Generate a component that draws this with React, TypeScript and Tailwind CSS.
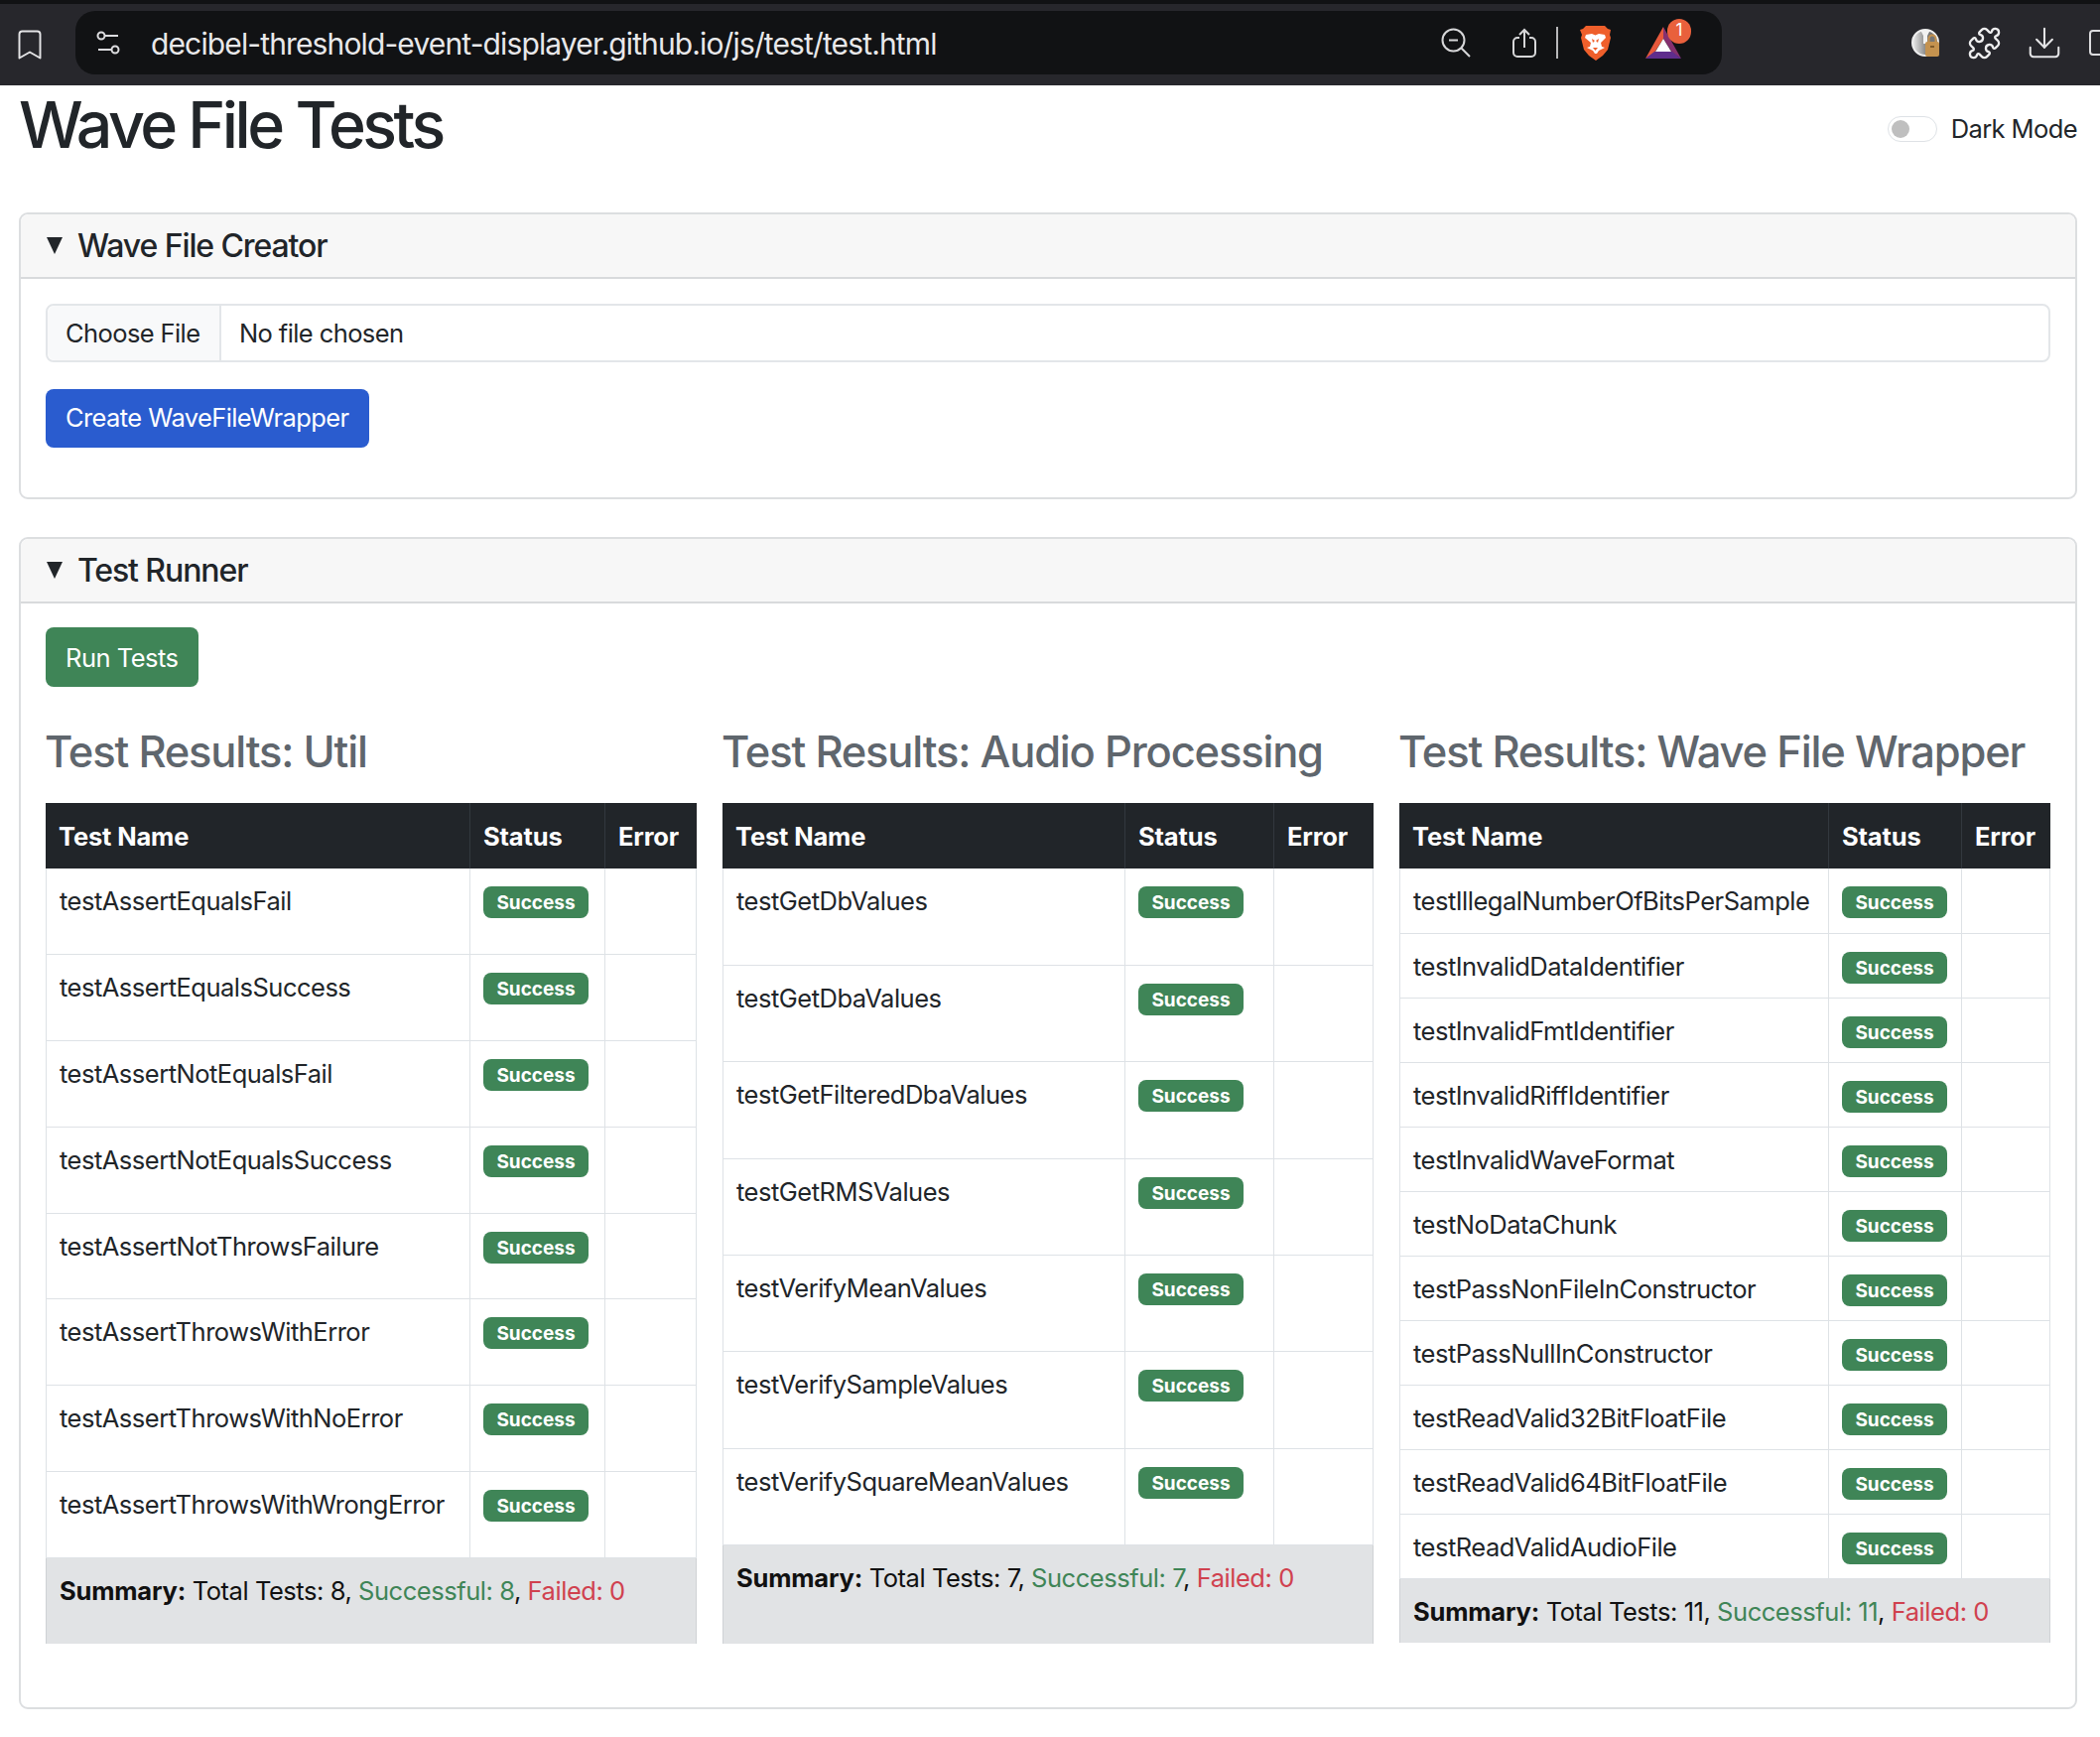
import { Bookmark, Download, Puzzle } from "lucide-react";

const UTIL = [
  "testAssertEqualsFail",
  "testAssertEqualsSuccess",
  "testAssertNotEqualsFail",
  "testAssertNotEqualsSuccess",
  "testAssertNotThrowsFailure",
  "testAssertThrowsWithError",
  "testAssertThrowsWithNoError",
  "testAssertThrowsWithWrongError",
];

const AUDIO = [
  "testGetDbValues",
  "testGetDbaValues",
  "testGetFilteredDbaValues",
  "testGetRMSValues",
  "testVerifyMeanValues",
  "testVerifySampleValues",
  "testVerifySquareMeanValues",
];

const WAVE = [
  "testIllegalNumberOfBitsPerSample",
  "testInvalidDataIdentifier",
  "testInvalidFmtIdentifier",
  "testInvalidRiffIdentifier",
  "testInvalidWaveFormat",
  "testNoDataChunk",
  "testPassNonFileInConstructor",
  "testPassNullInConstructor",
  "testReadValid32BitFloatFile",
  "testReadValid64BitFloatFile",
  "testReadValidAudioFile",
];

const SUITES = [
  { title: "Test Results: Util", tests: UTIL, rowH: 86.75, sumH: 87, w1: 427, w2: 136 },
  { title: "Test Results: Audio Processing", tests: AUDIO, rowH: 97.4, sumH: 99, w1: 405, w2: 150 },
  { title: "Test Results: Wave File Wrapper", tests: WAVE, rowH: 65, sumH: 65, w1: 432, w2: 134 },
];

function BraveIcon() {
  return (
    <svg width="31" height="35" viewBox="0 0 31 35" className="shrink-0">
      <path d="M6 0h19l3 3 3 1-1 5 1 3-3 12-5 6-7 5-7-5-5-6L1 12l1-3-2-5 3-1z" fill="#ef5f2b" />
      <path d="M6 9l6-1 3.500 1.500L19 8l6 1 1 3-5 5 1 4 3 1-6 3-2 3h-2l-2-3-6-3 3-1 1-4-6-5z" fill="#fff" />
      <path d="M12 13l3 2-2 2zM19 13l-3 2 2 2z" fill="#ef5f2b" />
      <path d="M13 22h5l-2.500 3z" fill="#ef5f2b" />
    </svg>
  );
}

function BatIcon() {
  return (
    <div className="relative ml-[35px] mr-[41px] w-[36px] h-[32px] shrink-0 mt-[-1px]">
      <svg width="36" height="32" viewBox="0 0 36 32">
        <path d="M18 0L0 32l9-6 9-14z" fill="#e8593c" />
        <path d="M18 0L36 32l-9-6-9-14z" fill="#85306f" />
        <path d="M0 32h36l-9-7H9z" fill="#5f2d8c" />
        <path d="M18 12l8 13H10z" fill="#fff" />
      </svg>
      <span className="absolute left-[22px] top-[-8px] w-[24px] h-[25px] rounded-[12px] bg-[#e9603c] text-white text-[17px] flex items-center justify-center">1</span>
    </div>
  );
}

function KeyIcon() {
  return (
    <svg width="28" height="28" viewBox="0 0 28 28" className="ml-[191px] shrink-0">
      <defs>
        <linearGradient id="keyShade" x1="0" y1="0" x2="1" y2="0">
          <stop offset="0" stopColor="#eeeeee" />
          <stop offset="0.6" stopColor="#777777" />
        </linearGradient>
      </defs>
      <circle cx="14" cy="14" r="13" fill="url(#keyShade)" stroke="#eeeeee" strokeWidth="2" />
      <path d="M9 1h10l-3 6v8h-4V7z" fill="#f2f2f2" />
      <rect x="14" y="13" width="14" height="15" rx="2" fill="#c4924f" />
      <path d="M17.500 13v-3a3.500 3.500 0 0 1 7 0v3" fill="none" stroke="#c4924f" strokeWidth="2" />
      <rect x="19" y="17" width="4" height="2" fill="#7f5a2a" />
    </svg>
  );
}

function Chrome() {
  return (
    <div className="h-[86px] border-t-[4px] border-[#111214] bg-[#27272c] flex items-center overflow-hidden">
      <Bookmark className="ml-[12px] mr-[28px] text-[#e4e4e6] shrink-0" size={36} strokeWidth={1.3} />
      <div className="h-[64px] w-[1659px] rounded-[20px] bg-[#111214] flex items-center shrink-0 -mt-[4px]">
        <svg width="24" height="24" viewBox="0 0 24 24" fill="none" stroke="#dcdcdf" strokeWidth="2" className="ml-[21px] shrink-0">
          <circle cx="5" cy="5" r="3.500" />
          <path d="M9 5h13" />
          <circle cx="19" cy="19" r="3.500" />
          <path d="M2 19h13" />
        </svg>
        <span className="ml-[31px] pt-[2px] text-[30px] text-[#e8e8ea] tracking-[-0.87px]">decibel-threshold-event-displayer.github.io/js/test/test.html</span>
        <div className="ml-auto flex items-center">
          <svg width="30" height="30" viewBox="0 0 30 30" fill="none" stroke="#d6d6d8" strokeWidth="2" className="shrink-0">
            <circle cx="12.500" cy="12.500" r="11" />
            <path d="M8 12.500h9M20.500 20.500L29 29" />
          </svg>
          <svg width="24" height="30" viewBox="0 0 24 30" fill="none" stroke="#d6d6d8" strokeWidth="2" className="ml-[42px] shrink-0">
            <path d="M7 10H5a4 4 0 0 0-4 4v11a4 4 0 0 0 4 4h14a4 4 0 0 0 4-4V14a4 4 0 0 0-4-4h-2" />
            <path d="M12 20V2M7 7l5-5 5 5" />
          </svg>
          <div className="ml-[20px] h-[32px] w-[2px] bg-[#b8b8ba]" />
          <div className="ml-[22px]">
            <BraveIcon />
          </div>
          <BatIcon />
        </div>
      </div>
      <div className="flex items-center -mt-[4px]">
        <KeyIcon />
        <Puzzle className="ml-[28px] text-[#eeeeef] shrink-0" size={35} strokeWidth={1.6} />
        <Download className="ml-[24px] text-[#e4e4e6] shrink-0" size={38} strokeWidth={1.3} />
        <div className="ml-[26px] h-[26px] w-[20px] rounded-[4px] border-2 border-[#dcdcdf] shrink-0" />
      </div>
    </div>
  );
}

function Caret() {
  return (
    <svg width="16" height="17" viewBox="0 0 16 17" className="mr-[15px] shrink-0">
      <path d="M0 0h16L8 17z" fill="#212529" />
    </svg>
  );
}

function ResultsTable({ suite }: { suite: (typeof SUITES)[number] }) {
  const passed = suite.tests.length;
  return (
    <div className="w-[656px] shrink-0">
      <h4 className="text-[43.5px] leading-[52px] font-medium text-[#5f666d] whitespace-nowrap tracking-[-1.2px] -ml-[1px]">{suite.title}</h4>
      <table className="mt-[26px] w-[656px] table-fixed border-collapse text-[25.5px] tracking-[-0.5px] text-[#212529]">
        <colgroup>
          <col style={{ width: suite.w1 }} />
          <col style={{ width: suite.w2 }} />
          <col />
        </colgroup>
        <thead>
          <tr className="h-[66px] bg-[#212529] text-white text-left text-[25.5px] font-bold tracking-[-0.15px]">
            <th className="px-[12px] pt-[3px] border-l border-r border-[#212529] border-r-[#32383e]">Test Name</th>
            <th className="px-[13px] pt-[3px] border-r border-[#32383e]">Status</th>
            <th className="px-[13px] pt-[3px] border-r border-[#212529]">Error</th>
          </tr>
        </thead>
        <tbody>
          {suite.tests.map((t) => (
            <tr key={t} style={{ height: suite.rowH }} className="border-b border-[#dee2e6]">
              <td className="px-[13px] pt-[15px] align-top border-l border-[#dee2e6] whitespace-nowrap leading-[36px]">{t}</td>
              <td className="px-[13px] pt-[18px] align-top border-l border-[#dee2e6]">
                <span className="block w-[106px] h-[32px] rounded-[8px] bg-[#3f8557] text-white text-[19px] font-bold tracking-normal text-center leading-[33px]">
                  Success
                </span>
              </td>
              <td className="border-x border-[#dee2e6]" />
            </tr>
          ))}
          <tr style={{ height: suite.sumH }} className="bg-[#e1e3e5]">
            <td colSpan={3} className="px-[13px] pt-[15px] align-top leading-[36px] border-x border-[#cfd2d5] whitespace-nowrap text-[#111] tracking-[-0.45px]">
              <b className="tracking-[-0.2px]">Summary:</b> Total Tests: {passed}, <span className="text-[#3f8557]">Successful: {passed}</span>,{" "}
              <span className="text-[#d0414f]">Failed: 0</span>
            </td>
          </tr>
        </tbody>
      </table>
    </div>
  );
}

export default function App() {
  return (
    <div className="w-[2116px] h-[1750px] bg-white overflow-hidden font-['Inter',sans-serif] text-[#212529]">
      <Chrome />
      <div className="pl-[19px] pr-[23px]">
        <div className="flex items-start justify-between h-[128px]">
          <h1 className="text-[64.5px] leading-[78px] mt-[1px] font-medium text-[#212529] tracking-[-3.5px]">Wave File Tests</h1>
          <div className="flex items-center mt-[26px]">
            <div className="w-[50px] h-[26px] rounded-full border border-[#dee2e6] bg-white flex items-center pl-[3px]">
              <div className="w-[18px] h-[18px] rounded-full bg-[#bfbfbf]" />
            </div>
            <span className="ml-[14px] text-[25.5px] leading-[36px] tracking-[-0.6px]">Dark Mode</span>
          </div>
        </div>

        <section className="h-[289px] rounded-[9px] border-2 border-[#dcdee0]">
          <div className="h-[65px] bg-[#f7f7f7] border-b-2 border-[#d8dadc] rounded-t-[8px] flex items-center pl-[26px]">
            <Caret />
            <span className="text-[32px] font-medium tracking-[-1.1px]">Wave File Creator</span>
          </div>
          <div className="px-[25px] pt-[25px]">
            <div className="h-[59px] rounded-[8px] border-2 border-[#e3e6e9] flex items-center text-[25.5px] tracking-[-0.6px]">
              <span className="h-full w-[175px] bg-[#f8f9fa] border-r-2 border-[#e3e6e9] rounded-l-[8px] flex items-center pl-[18px] pt-[1px]">Choose File</span>
              <span className="ml-[18px] pt-[1px]">No file chosen</span>
            </div>
            <button className="mt-[27px] block w-[326px] h-[59px] rounded-[8px] bg-[#2a5ccf] text-white text-[25.5px] tracking-[-0.6px] text-left pl-[20px]">
              Create WaveFileWrapper
            </button>
          </div>
        </section>

        <section className="mt-[38px] h-[1181px] rounded-[9px] border-2 border-[#dcdee0]">
          <div className="h-[65px] bg-[#f7f7f7] border-b-2 border-[#d8dadc] rounded-t-[8px] flex items-center pl-[26px]">
            <Caret />
            <span className="text-[32px] font-medium tracking-[-1.1px]">Test Runner</span>
          </div>
          <div className="px-[25px] pt-[24px]">
            <button className="block w-[154px] h-[60px] rounded-[8px] bg-[#3f8557] text-white text-[25.5px] tracking-[-0.5px] text-left pl-[20px] pt-[2px]">Run Tests</button>
            <div className="mt-[39px] flex gap-[26px]">
              {SUITES.map((s) => (
                <ResultsTable key={s.title} suite={s} />
              ))}
            </div>
          </div>
        </section>
      </div>
    </div>
  );
}
